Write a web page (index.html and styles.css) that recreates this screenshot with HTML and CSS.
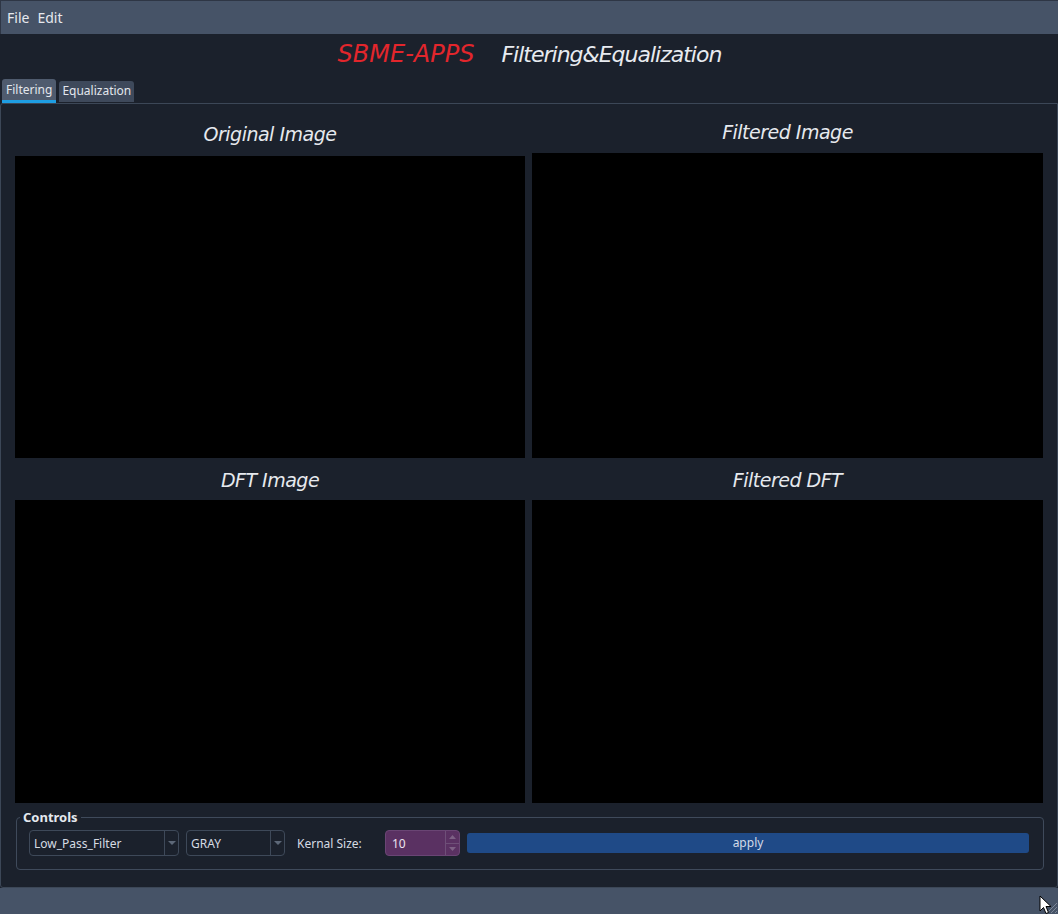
FILE: index.html
```
<!DOCTYPE html>
<html>
<head>
<meta charset="utf-8">
<link rel="stylesheet" href="styles.css">
</head>
<body>
<div class="window">
  <div class="menubar">
    <span class="menu-item">File</span>
    <span class="menu-item">Edit</span>
  </div>
  <div class="title-row">
    <span class="title-red">SBME-APPS</span>
    <span class="title-white">Filtering&amp;Equalization</span>
  </div>
  <div class="tabs">
    <div class="tab active">Filtering</div>
    <div class="tab">Equalization</div>
  </div>
  <div class="panel">
    <div class="grid">
      <div class="cell">
        <div class="cap cap-a">Original Image</div>
        <div class="view"></div>
      </div>
      <div class="cell">
        <div class="cap cap-b">Filtered Image</div>
        <div class="view"></div>
      </div>
      <div class="cell">
        <div class="cap cap-c">DFT Image</div>
        <div class="view"></div>
      </div>
      <div class="cell">
        <div class="cap cap-c">Filtered DFT</div>
        <div class="view"></div>
      </div>
    </div>
    <fieldset class="controls">
      <legend>Controls</legend>
      <div class="combo combo-wide">
        <span class="combo-text">Low_Pass_Filter</span>
        <span class="combo-btn"><svg width="8" height="5" viewBox="0 0 8 5"><path d="M0 0 L8 0 L4 4 Z" fill="#5d6878"/></svg></span>
      </div>
      <div class="combo combo-narrow">
        <span class="combo-text">GRAY</span>
        <span class="combo-btn"><svg width="8" height="5" viewBox="0 0 8 5"><path d="M0 0 L8 0 L4 4 Z" fill="#5d6878"/></svg></span>
      </div>
      <span class="ctl-label">Kernal Size:</span>
      <div class="spin">
        <span class="spin-text">10</span>
        <span class="spin-btns">
          <span class="spin-up"><svg width="7" height="4" viewBox="0 0 7 4"><path d="M0 4 L7 4 L3.5 0 Z" fill="#7d6185"/></svg></span>
          <span class="spin-down"><svg width="7" height="4" viewBox="0 0 7 4"><path d="M0 0 L7 0 L3.5 4 Z" fill="#7d6185"/></svg></span>
        </span>
      </div>
      <div class="apply">apply</div>
    </fieldset>
  </div>
  <div class="statusbar">
    <svg class="grip" width="18" height="18" viewBox="0 0 18 18">
      <path d="M17 7 L7 17 M17 11 L11 17 M17 15 L15 17" stroke="#7c8797" stroke-width="1"/>
    </svg>
    <svg class="cursor" width="14" height="20" viewBox="0 0 14 20">
      <path d="M1 1 L1 16 L4.5 12.5 L7 18.5 L9.5 17.5 L7 11.5 L12 11.5 Z" fill="#ffffff" stroke="#000000" stroke-width="1"/>
    </svg>
  </div>
</div>
</body>
</html>
```
FILE: styles.css
```
html, body {
  margin: 0;
  padding: 0;
  background: #1b212c;
}
.window {
  width: 1058px;
  height: 914px;
  display: flex;
  flex-direction: column;
  background: #1b212c;
  font-family: "Noto Sans", "DejaVu Sans", sans-serif;
  color: #dde2ea;
  overflow: hidden;
}
.menubar {
  height: 33px;
  flex: none;
  background: #465367;
  border-top: 1px solid #2e3645;
  border-left: 1px solid #2e3645;
  display: flex;
  align-items: center;
  padding-left: 6px;
  gap: 8px;
  font-size: 14px;
  color: #e6e9ee;
}
.title-row {
  height: 44px;
  flex: none;
  box-sizing: border-box;
  display: flex;
  justify-content: center;
  align-items: center;
  gap: 27px;
  font-family: "DejaVu Sans", Verdana, sans-serif;
  font-style: italic;
  font-size: 24px;
  padding-left: 1px;
  padding-bottom: 4px;
}
.title-red {
  color: #e3262c;
}
.title-white {
  color: #e8ebf0;
  font-size: 22px;
  letter-spacing: -1px;
}
.tabs {
  height: 25px;
  flex: none;
  display: flex;
  align-items: flex-end;
  gap: 3px;
  padding-left: 2px;
}
.tab {
  font-size: 12px;
  background: #3e495b;
  color: #e3e7ed;
  border-radius: 3px 3px 0 0;
  height: 21px;
  line-height: 20px;
  padding: 0 3px 0 3px;
  box-sizing: border-box;
  margin-bottom: 1px;
}
.tab.active {
  background: #4f5b6e;
  height: 24px;
  line-height: 22px;
  padding: 0 4px;
  border-bottom: 3px solid #1e9ee3;
  margin-bottom: 0;
}
.panel {
  height: 785px;
  flex: none;
  border: 1px solid #3c4757;
  border-radius: 3px 0 3px 3px;
  box-sizing: border-box;
  padding: 0 13px 0 14px;
  display: flex;
  flex-direction: column;
}
.grid {
  display: grid;
  grid-template-columns: 510px 511px;
  grid-template-rows: 354px 345px;
  column-gap: 7px;
}
.cell {
  display: flex;
  flex-direction: column;
}
.cap {
  font-family: "DejaVu Sans", Verdana, sans-serif;
  font-style: italic;
  font-size: 19px;
  letter-spacing: -0.5px;
  text-align: center;
  line-height: 28px;
  color: #e6e9ee;
  box-sizing: border-box;
}
.cap-a {
  height: 52px;
  padding-top: 16px;
}
.cap-b {
  height: 49px;
  padding-top: 14px;
}
.cap-c {
  height: 42px;
  padding-top: 8px;
}
.view {
  flex: 1;
  background: #000000;
}
.controls {
  margin: 8px 0 0 1px;
  border: 1px solid #3f4a5b;
  border-radius: 4px;
  padding: 7px 14px 13px 12px;
  display: flex;
  align-items: center;
  gap: 7px;
  height: 59px;
  box-sizing: border-box;
  min-width: 0;
}
.controls legend {
  font-size: 13px;
  font-weight: bold;
  color: #e4e8ee;
  padding: 0 3px;
  margin-left: -9px;
  line-height: 12px;
}
.combo {
  height: 26px;
  box-sizing: border-box;
  border: 1px solid #3e4959;
  border-radius: 4px;
  display: flex;
  align-items: center;
  font-size: 12px;
  color: #d6dbe3;
}
.combo-wide {
  width: 150px;
}
.combo-narrow {
  width: 99px;
}
.combo-text {
  flex: 1;
  padding-left: 4px;
}
.combo-btn {
  width: 13px;
  height: 24px;
  border-left: 1px solid #3e4959;
  display: flex;
  align-items: center;
  justify-content: center;
}
.ctl-label {
  font-size: 12px;
  color: #d6dbe3;
  margin-left: 5px;
  width: 81px;
}
.spin {
  width: 75px;
  height: 26px;
  box-sizing: border-box;
  background: #5a3162;
  border: 1px solid #6a4574;
  border-radius: 4px;
  display: flex;
  align-items: center;
  font-size: 12px;
  color: #ece4ee;
}
.spin-text {
  flex: 1;
  padding-left: 6px;
}
.spin-btns {
  width: 13px;
  height: 24px;
  border-left: 1px solid #6e4f78;
  display: flex;
  flex-direction: column;
}
.spin-up, .spin-down {
  flex: 1;
  display: flex;
  align-items: center;
  justify-content: center;
}
.spin-up {
  border-bottom: 1px solid #6e4f78;
}
.apply {
  flex: 1;
  height: 20px;
  background: #1f4a87;
  border-radius: 3px;
  text-align: center;
  font-size: 12px;
  line-height: 20px;
  color: #d3dbe8;
}
.statusbar {
  flex: 1;
  background: #465367;
  position: relative;
}
.grip {
  position: absolute;
  right: 0;
  bottom: 0;
}
.cursor {
  position: absolute;
  left: 1039px;
  top: 7px;
}
```
